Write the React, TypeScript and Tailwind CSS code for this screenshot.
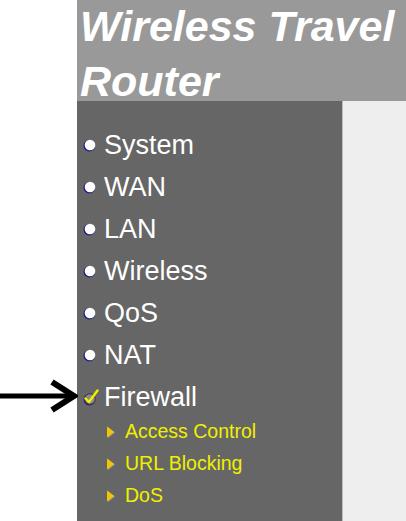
const mainItems = ["System", "WAN", "LAN", "Wireless", "QoS", "NAT"]
const subItems = ["Access Control", "URL Blocking", "DoS"]

const Bullet = () => (
  <svg width="14" height="14" viewBox="0 0 14 14" className="shrink-0">
    <circle cx="6.3" cy="7.7" r="5.8" fill="#1c1c8c" />
    <circle cx="7" cy="7" r="5.3" fill="#ffffff" />
  </svg>
)

const CheckBullet = () => (
  <svg width="16" height="18" viewBox="0 0 16 18" className="shrink-0">
    <circle cx="6.4" cy="11.6" r="5.8" fill="#1c1c8c" />
    <circle cx="7" cy="11" r="5.3" fill="#8a8a8a" stroke="#3a3a3a" strokeWidth="1" />
    <path d="M2.5 10.5 L6 14 L14.5 2.5" fill="none" stroke="#f2f200" strokeWidth="2.4" strokeLinecap="round" strokeLinejoin="round" />
  </svg>
)

const Triangle = () => (
  <svg width="10" height="13" viewBox="0 0 10 13" className="shrink-0">
    <polygon points="2,1 9,6.5 2,12" fill="#9a9a9a" />
    <polygon points="1,0.5 8,6 1,11.5" fill="#f5c400" />
  </svg>
)

const Arrow = () => (
  <svg width="78" height="34" viewBox="0 0 78 34">
    <line x1="0" y1="17" x2="70" y2="17" stroke="#000" strokeWidth="5" />
    <polyline points="52,3 74,17 52,31" fill="none" stroke="#000" strokeWidth="6" strokeLinejoin="miter" />
  </svg>
)

export default function App() {
  return (
    <div className="flex min-h-[521px] bg-white" style={{ fontFamily: '"Liberation Sans", Arial, sans-serif' }}>
      <div className="w-[77px] shrink-0" />
      <div className="flex flex-1 flex-col">
        {/* Header */}
        <div className="h-[101px] bg-[#999999] pl-[3px]">
          <div className="-mt-[1px] whitespace-nowrap text-[43px] font-bold italic leading-[55px] text-white">
            Wireless Travel
            <br />
            Router
          </div>
        </div>

        <div className="flex flex-1">
          {/* Sidebar */}
          <div className="w-[265px] shrink-0 bg-[#666666] pt-[23px]">
            {mainItems.map((item) => (
              <div key={item} className="flex h-[42px] items-center gap-[7px] pl-[6px]">
                <Bullet />
                <span className="text-[27px] leading-none text-white">{item}</span>
              </div>
            ))}
            <div className="relative flex h-[42px] items-center gap-[5px] pl-[6px]">
              <div className="absolute left-[-77px] top-[3px]">
                <Arrow />
              </div>
              <CheckBullet />
              <span className="text-[27px] leading-none text-white">Firewall</span>
            </div>
            <div className="-mt-[2px] pb-4">
              {subItems.map((item) => (
                <div key={item} className="flex h-[32px] items-center gap-[9px] pl-[29px]">
                  <Triangle />
                  <span className="text-[19.5px] leading-none text-[#f0f000]">{item}</span>
                </div>
              ))}
            </div>
          </div>

          {/* Content */}
          <div className="flex-1 border-l border-[#bbbbbb] bg-[#eeeeee]" />
        </div>
      </div>
    </div>
  )
}
